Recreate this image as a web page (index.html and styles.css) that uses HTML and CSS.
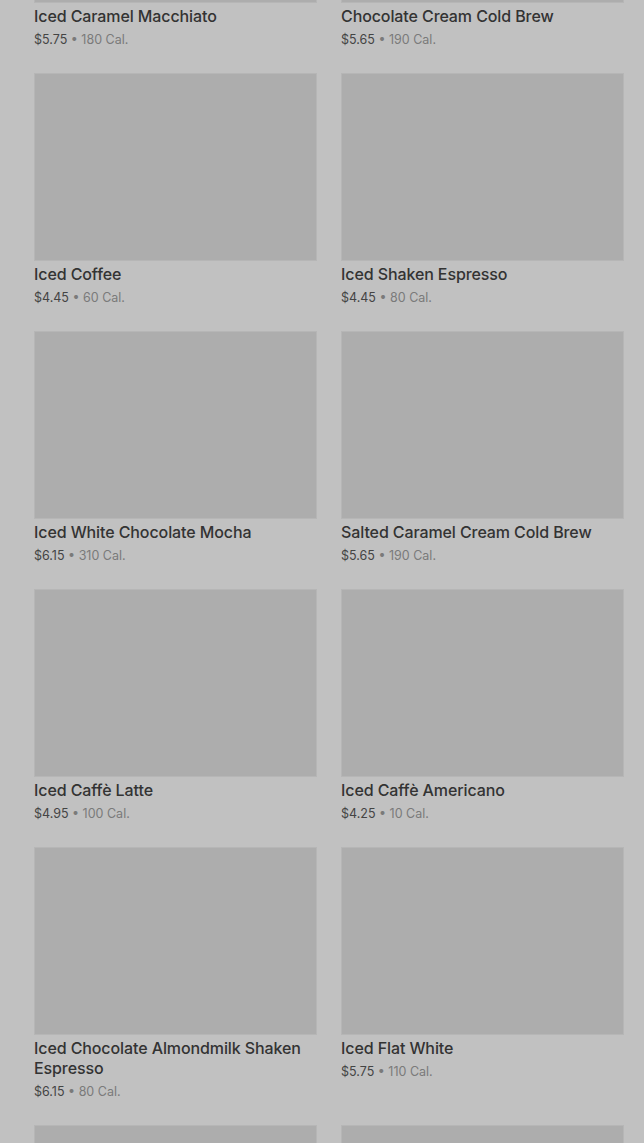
FILE: index.html
```html
<!DOCTYPE html>
<html lang="en">
<head>
    <meta charset="UTF-8">
    <meta name="viewport" content="width=device-width, initial-scale=1.0">
    <link rel="stylesheet" href="styles.css">
    <title>Cold Coffees</title>
</head>
<body>
    <div class="menu-grid">
        <div class="item">
            <div class="thumb"></div>
            <h3>Iced Caramel Macchiato</h3>
            <p class="meta">$5.75 <span class="cal">• 180 Cal.</span></p>
        </div>
        <div class="item">
            <div class="thumb"></div>
            <h3>Chocolate Cream Cold Brew</h3>
            <p class="meta">$5.65 <span class="cal">• 190 Cal.</span></p>
        </div>
        <div class="item">
            <div class="thumb"></div>
            <h3>Iced Coffee</h3>
            <p class="meta">$4.45 <span class="cal">• 60 Cal.</span></p>
        </div>
        <div class="item">
            <div class="thumb"></div>
            <h3>Iced Shaken Espresso</h3>
            <p class="meta">$4.45 <span class="cal">• 80 Cal.</span></p>
        </div>
        <div class="item">
            <div class="thumb"></div>
            <h3>Iced White Chocolate Mocha</h3>
            <p class="meta">$6.15 <span class="cal">• 310 Cal.</span></p>
        </div>
        <div class="item">
            <div class="thumb"></div>
            <h3>Salted Caramel Cream Cold Brew</h3>
            <p class="meta">$5.65 <span class="cal">• 190 Cal.</span></p>
        </div>
        <div class="item">
            <div class="thumb"></div>
            <h3>Iced Caffè Latte</h3>
            <p class="meta">$4.95 <span class="cal">• 100 Cal.</span></p>
        </div>
        <div class="item">
            <div class="thumb"></div>
            <h3>Iced Caffè Americano</h3>
            <p class="meta">$4.25 <span class="cal">• 10 Cal.</span></p>
        </div>
        <div class="item">
            <div class="thumb"></div>
            <h3>Iced Chocolate Almondmilk Shaken Espresso</h3>
            <p class="meta">$6.15 <span class="cal">• 80 Cal.</span></p>
        </div>
        <div class="item">
            <div class="thumb"></div>
            <h3>Iced Flat White</h3>
            <p class="meta">$5.75 <span class="cal">• 110 Cal.</span></p>
        </div>
        <div class="item">
            <div class="thumb"></div>
        </div>
        <div class="item">
            <div class="thumb"></div>
        </div>
    </div>
</body>
</html>
```
FILE: styles.css
```css
html, body {
    margin: 0;
    height: 100%;
    overflow: hidden;
}

body {
    background-color: #c1c1c1;
    font-family: "Inter", "Liberation Sans", sans-serif;
}

.menu-grid {
    display: grid;
    grid-template-columns: 283px 283px;
    column-gap: 24px;
    row-gap: 24px;
    padding: 0 20px 0 34px;
    /* scrolled: top row is cut off */
    margin-top: -185px;
}

.thumb {
    height: 188px;
    background-color: #adadad;
    border: 1px solid #b6b6b6;
    box-sizing: border-box;
}

.item h3 {
    margin: 3px 0 0;
    font-size: 16px;
    line-height: 20px;
    font-weight: 500;
    letter-spacing: -0.1px;
    color: #333333;
}

.meta {
    margin: 5px 0 0;
    font-size: 12.5px;
    line-height: 18px;
    color: #444444;
}

.cal {
    color: #7a7a7a;
}
```
